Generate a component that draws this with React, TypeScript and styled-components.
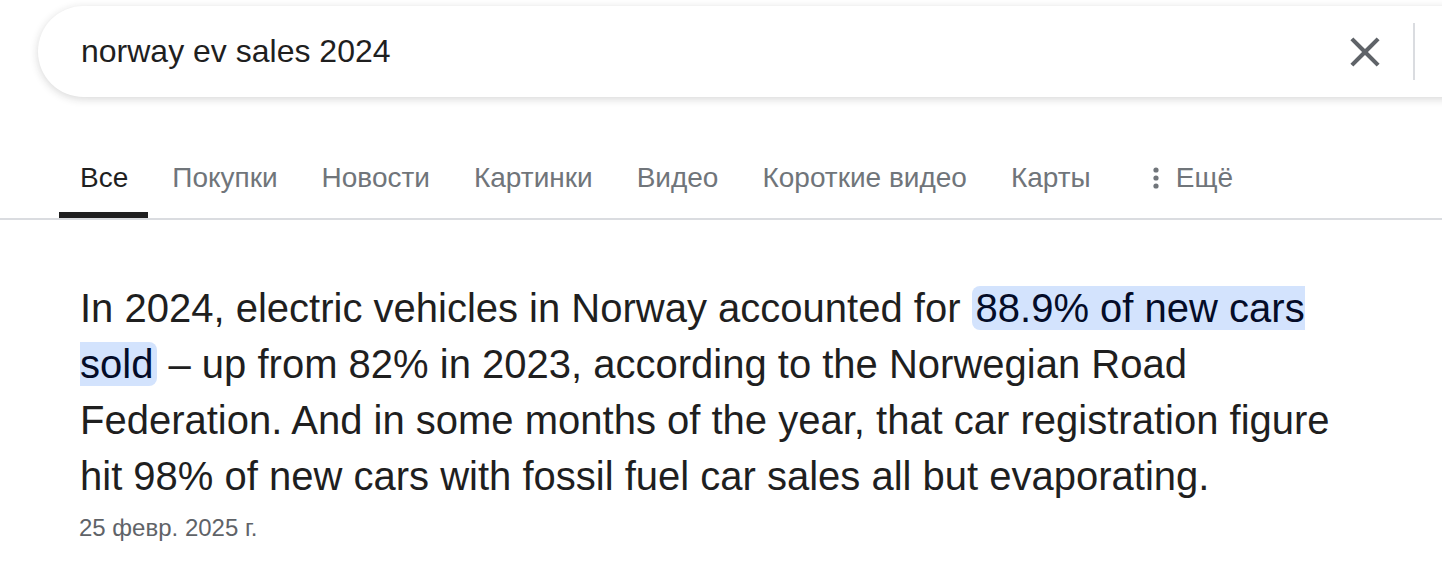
import styled, { createGlobalStyle } from 'styled-components'

const GlobalStyle = createGlobalStyle`
  html, body {
    margin: 0;
    padding: 0;
    background: #fff;
    overflow: hidden;
  }
  body {
    font-family: "Liberation Sans", Arial, sans-serif;
    color: #1f1f1f;
  }
`

const Page = styled.div`
  width: 1442px;
  height: 566px;
  overflow: hidden;
  display: flex;
  flex-direction: column;
`

const Header = styled.div`
  padding: 6px 0 0 38px;
  height: 97px;
  box-sizing: border-box;
`

const SearchBox = styled.div`
  width: 1460px;
  height: 91px;
  box-sizing: border-box;
  background: #fff;
  border-radius: 46px 0 0 46px;
  box-shadow: 0 2px 8px rgba(32, 33, 36, 0.18);
  display: flex;
  align-items: center;
  padding-left: 43px;
`

const Query = styled.div`
  flex: 1;
  font-size: 32px;
  color: #1f1f1f;
`

const ClearButton = styled.button`
  border: none;
  background: transparent;
  padding: 0;
  width: 50px;
  height: 50px;
  display: flex;
  align-items: center;
  justify-content: center;
  color: #5f6368;
  margin-right: 23px;
`

const Divider = styled.div`
  width: 2px;
  height: 57px;
  background: #dadce0;
  margin-right: 83px;
`

const TabBar = styled.nav`
  margin-top: 43px;
  height: 80px;
  box-sizing: border-box;
  border-bottom: 2px solid #dadce0;
  display: flex;
  align-items: stretch;
  padding-left: 59px;
`

const Tab = styled.div<{ $active?: boolean }>`
  position: relative;
  padding: 0 20px 2px 21px;
  margin-right: 3px;
  display: flex;
  align-items: center;
  gap: 16px;
  font-size: 28px;
  color: ${(p) => (p.$active ? '#1f1f1f' : '#70757a')};

  &::after {
    content: '';
    display: ${(p) => (p.$active ? 'block' : 'none')};
    position: absolute;
    left: 0;
    right: 0;
    bottom: 0;
    height: 6px;
    background: #1f1f1f;
  }
`

const MoreTab = styled(Tab)`
  margin-left: 17px;
`

const Content = styled.div`
  padding: 60px 0 0 80px;
`

const Answer = styled.p`
  margin: 0;
  width: 1280px;
  font-size: 40px;
  line-height: 56px;
  color: #1f1f1f;
`

const Mark = styled.span`
  background: #d3e3fd;
  color: #040c28;
  border-radius: 8px;
  padding: 0 4px;
`

const DateLine = styled.div`
  margin-top: 10px;
  margin-left: -1px;
  font-size: 24px;
  color: #5f6368;
`

function CloseIcon() {
  return (
    <svg width="50" height="50" viewBox="0 0 24 24" fill="currentColor">
      <path d="M19 6.41 17.59 5 12 10.59 6.41 5 5 6.41 10.59 12 5 17.59 6.41 19 12 13.41 17.59 19 19 17.59 13.41 12z" />
    </svg>
  )
}

function DotsIcon() {
  return (
    <svg width="8" height="24" viewBox="0 0 8 24" fill="#70757a">
      <circle cx="4" cy="4" r="2.6" />
      <circle cx="4" cy="12" r="2.6" />
      <circle cx="4" cy="20" r="2.6" />
    </svg>
  )
}

const tabs = ['Покупки', 'Новости', 'Картинки', 'Видео', 'Короткие видео', 'Карты']

export default function App() {
  return (
    <Page>
      <GlobalStyle />
      <Header>
        <SearchBox>
          <Query>norway ev sales 2024</Query>
          <ClearButton aria-label="Очистить">
            <CloseIcon />
          </ClearButton>
          <Divider />
        </SearchBox>
      </Header>
      <TabBar>
        <Tab $active>Все</Tab>
        {tabs.map((t) => (
          <Tab key={t}>{t}</Tab>
        ))}
        <MoreTab>
          <DotsIcon />
          Ещё
        </MoreTab>
      </TabBar>
      <Content>
        <Answer>
          In 2024, electric vehicles in Norway accounted for <Mark>88.9% of new cars sold</Mark> – up
          from 82% in 2023, according to the Norwegian Road Federation. And in some months of the
          year, that car registration figure hit 98% of new cars with fossil fuel car sales all but
          evaporating.
        </Answer>
        <DateLine>25 февр. 2025 г.</DateLine>
      </Content>
    </Page>
  )
}
